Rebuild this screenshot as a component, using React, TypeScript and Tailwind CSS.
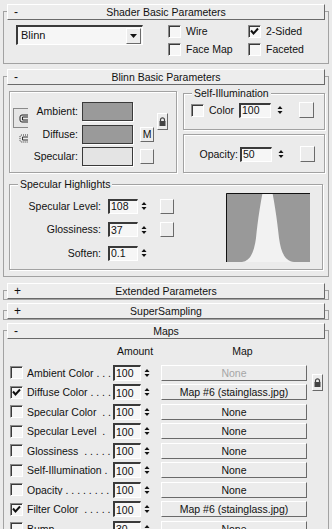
import React from 'react';

// classic max-style bevels
const raised = 'border border-t-white border-l-white border-b-[#6a6a6a] border-r-[#6a6a6a]';
const sunken = 'border-t-2 border-l-2 border-b border-r border-t-[#3a3a3a] border-l-[#3a3a3a] border-b-white border-r-white';

function Check({ on }: { on?: boolean }) {
  return (
    <span className="w-[13px] h-[13px] shrink-0 flex items-center justify-center bg-[#f6f6f6] border border-t-[#8a8a8a] border-l-[#8a8a8a] border-b-white border-r-white shadow-[inset_1px_1px_0_#3a3a3a]">
      {on && (
        <svg width="9" height="9" viewBox="0 0 9 9">
          <path d="M1 3.5 L3.5 6.5 L8 1.5" stroke="#111" strokeWidth="2" fill="none" />
        </svg>
      )}
    </span>
  );
}

function Arrows() {
  return (
    <svg width="6" height="12" viewBox="0 0 6 12" className="shrink-0">
      <path d="M0.5 5 L3 2 L5.5 5 Z" fill="#111" />
      <path d="M0.5 7 L3 10 L5.5 7 Z" fill="#111" />
    </svg>
  );
}

function Lock() {
  return (
    <span className={`w-[11px] h-[17px] flex justify-center pt-[3px] bg-[#ececec] ${raised}`}>
      <svg width="7" height="9" viewBox="0 0 7 9">
        <path d="M1.5 4.5 V2.8 A2 2 0 0 1 5.5 2.8 V4.5" stroke="#444" strokeWidth="1.2" fill="none" />
        <rect x="0.5" y="4" width="6" height="5" fill="#444" />
      </svg>
    </span>
  );
}

function Group({ title, className, children }: { title?: string; className?: string; children?: React.ReactNode }) {
  return (
    <div className={`relative border border-[#a2a2a2] shadow-[inset_1px_1px_0_#fff,1px_1px_0_#fff] ${className ?? ''}`}>
      {title && (
        <span className="absolute -top-[6px] left-[8px] px-[2px] bg-[#ebebeb] leading-none">{title}</span>
      )}
      {children}
    </div>
  );
}

function Rollout({ title, open, className, children }: { title: string; open?: boolean; className?: string; children?: React.ReactNode }) {
  return (
    <div className={`mx-[3px] border border-[#a2a2a2] ${className ?? ''}`}>
      <div className={`-mt-[8px] mx-[3px] h-[16px] grid grid-cols-[20px_1fr_20px] items-center bg-[#ededed] ${raised}`}>
        <span className="pl-[6px] text-[12px]">{open ? '-' : '+'}</span>
        <span className="text-center">{title}</span>
        <span />
      </div>
      {children}
    </div>
  );
}

const colors = [
  { label: 'Ambient:', fill: 'bg-[#9a9a9a]', btn: '' },
  { label: 'Diffuse:', fill: 'bg-[#9a9a9a]', btn: 'M' },
  { label: 'Specular:', fill: 'bg-[#e4e4e4]', btn: ' ' },
];

const highlights = [
  { label: 'Specular Level:', value: '108', btn: true },
  { label: 'Glossiness:', value: '37', btn: true },
  { label: 'Soften:', value: '0.1', btn: false },
];

const maps = [
  { label: 'Ambient Color . . .', on: false, amt: '100', map: 'None', dim: true },
  { label: 'Diffuse Color . . . .', on: true, amt: '100', map: 'Map #6 (stainglass.jpg)' },
  { label: 'Specular Color  . .', on: false, amt: '100', map: 'None' },
  { label: 'Specular Level  .', on: false, amt: '100', map: 'None' },
  { label: 'Glossiness  . . . . .', on: false, amt: '100', map: 'None' },
  { label: 'Self-Illumination .', on: false, amt: '100', map: 'None' },
  { label: 'Opacity . . . . . . . .', on: false, amt: '100', map: 'None' },
  { label: 'Filter Color  . . . . .', on: true, amt: '100', map: 'Map #6 (stainglass.jpg)' },
  { label: 'Bump . . . . . . . . . .', on: false, amt: '30', map: 'None' },
];

export default function App() {
  return (
    <div className="w-[332px] h-[529px] overflow-hidden bg-[#ebebeb] text-[10.5px] leading-none text-[#111] font-['Liberation_Sans',Arial,sans-serif] select-none">
      {/* Shader Basic Parameters */}
      <Rollout title="Shader Basic Parameters" open className="mt-[11px]">
        <div className="flex mt-[5px] pb-[7px]">
          <div className={`ml-[12px] w-[127px] h-[20px] flex items-center bg-[#f6f6f6] ${sunken}`}>
            <span className="flex-1 pl-[3px] text-[11px]">Blinn</span>
            <span className={`w-[15px] h-[16px] mr-px flex items-center justify-center bg-[#ececec] ${raised}`}>
              <svg width="7" height="4" viewBox="0 0 7 4">
                <path d="M0 0 H7 L3.5 4 Z" fill="#111" />
              </svg>
            </span>
          </div>
          <div className="ml-[25px] grid grid-cols-[80px_80px] gap-y-[5px]">
            {[
              ['Wire', false],
              ['2-Sided', true],
              ['Face Map', false],
              ['Faceted', false],
            ].map(([t, on]) => (
              <div key={t as string} className="h-[13px] flex items-center gap-[5px]">
                <Check on={on as boolean} />
                <span>{t}</span>
              </div>
            ))}
          </div>
        </div>
      </Rollout>

      {/* Blinn Basic Parameters */}
      <Rollout title="Blinn Basic Parameters" open className="mt-[12px]">
        <div className="flex mt-[6px]">
          <Group className="ml-[5px] w-[168px] h-[82px] flex">
            <div className="ml-[3px] mt-[16px] w-[15px] flex flex-col">
              <span className="h-[20px] flex items-center justify-end border border-[#8a8a8a] border-r-0 bg-[#e6e6e6]">
                <svg width="9" height="9" viewBox="0 0 9 9">
                  <path d="M9 1 H3 Q1 1 1 3 V6 Q1 8 3 8 H9" stroke="#222" fill="none" />
                  <path d="M9 3 H3.5 V6 H9" stroke="#222" fill="none" />
                </svg>
              </span>
              <span className="h-[20px] flex items-center justify-end">
                <svg width="9" height="9" viewBox="0 0 9 9">
                  <path d="M9 1 H3 Q1 1 1 3 V6 Q1 8 3 8 H9" stroke="#333" fill="none" strokeDasharray="1 1" />
                  <path d="M9 3 H3.5 V6 H9" stroke="#333" fill="none" />
                </svg>
              </span>
            </div>
            <div className="mt-[10px] flex flex-col gap-y-[3.5px]">
              {colors.map((c) => (
                <div key={c.label} className="h-[19px] flex items-center">
                  <span className="w-[50px] text-right">{c.label}</span>
                  <span className={`ml-[4px] w-[51px] h-[19px] border border-[#3a3a3a] shadow-[1px_1px_0_#fff] ${c.fill}`} />
                  {c.btn ? (
                    <span className={`ml-[7px] w-[14px] h-[15px] flex items-center justify-center bg-[#ececec] ${raised}`}>
                      {c.btn.trim()}
                    </span>
                  ) : (
                    <span className="ml-[7px] w-[14px]" />
                  )}
                </div>
              ))}
            </div>
            <div className="ml-[3px] mt-[21px]">
              <Lock />
            </div>
          </Group>

          <div className="ml-[6px] w-[142px] flex flex-col">
            <Group title="Self-Illumination" className="mt-[2px] h-[37px]">
              <div className="flex items-center h-[16px] mt-[8px] pl-[7px]">
                <Check />
                <span className="ml-[5px] w-[25px]">Color</span>
                <span className={`ml-[5px] w-[32px] h-[15px] flex items-center pl-[1px] bg-[#f6f6f6] ${sunken}`}>100</span>
                <span className="ml-[6px]"><Arrows /></span>
                <span className={`ml-[16px] w-[15px] h-[16px] bg-[#ececec] ${raised}`} />
              </div>
            </Group>
            <Group className="mt-[4px] h-[39px]">
              <div className="flex items-center h-[16px] mt-[11px] pl-[4px]">
                <span className="w-[50px] text-right">Opacity:</span>
                <span className={`ml-[2px] w-[32px] h-[15px] flex items-center pl-[1px] bg-[#f6f6f6] ${sunken}`}>50</span>
                <span className="ml-[6px]"><Arrows /></span>
                <span className={`ml-[16px] w-[15px] h-[16px] bg-[#ececec] ${raised}`} />
              </div>
            </Group>
          </div>
        </div>

        <Group title="Specular Highlights" className="ml-[5px] mt-[11px] mb-[6px] w-[314px] h-[86px] flex">
          <div className="pt-[13px] flex flex-col gap-y-[7.5px]">
            {highlights.map((h) => (
              <div key={h.label} className="h-[16px] flex items-center">
                <span className="w-[91px] text-right">{h.label}</span>
                <span className={`ml-[7px] w-[30px] h-[15px] flex items-center pl-[1px] bg-[#f6f6f6] ${sunken}`}>{h.value}</span>
                <span className="ml-[3px]"><Arrows /></span>
                {h.btn && <span className={`ml-[13px] w-[14px] h-[15px] bg-[#ececec] ${raised}`} />}
              </div>
            ))}
          </div>
          <svg width="84" height="69" viewBox="0 0 84 69" className="ml-auto mr-[12px] mt-[8px]">
            <rect width="84" height="69" fill="#999999" />
            <path d="M16 69 C24 68 28 60 30 45 C32 25 35 8 36.5 0 L46.5 0 C48 8 51 25 53 45 C55 60 59 68 68 69 Z" fill="#f2f2f2" />
            <path d="M0.5 69 V0.5 H84" stroke="#111" fill="none" />
          </svg>
        </Group>
      </Rollout>

      <Rollout title="Extended Parameters" className="mt-[13px]" />
      <Rollout title="SuperSampling" className="mt-[10px]" />

      {/* Maps */}
      <Rollout title="Maps" open className="mt-[10px] border-b-0">
        <div className="h-[24px] flex items-center pl-[101px]">
          <span className="w-[60px] text-center">Amount</span>
          <span className="ml-[47px] w-[61px] text-center">Map</span>
        </div>
        <div className="flex">
          <div className="flex flex-col">
            {maps.map((m) => (
              <div key={m.label} className="h-[19.5px] flex items-center pl-[6px]">
                <Check on={m.on} />
                <span className="ml-[4px] w-[85px] whitespace-pre overflow-hidden">{m.label}</span>
                <span className={`ml-[1px] w-[28px] h-[16px] flex items-center pl-[1px] bg-[#f6f6f6] ${sunken}`}>{m.amt}</span>
                <span className="ml-[3px]"><Arrows /></span>
                <span
                  className={`ml-[11px] w-[146px] h-[16px] flex items-center justify-center bg-[#ececec] ${raised} ${
                    m.dim ? 'text-[#a6a6a6]' : ''
                  }`}
                >
                  {m.map}
                </span>
              </div>
            ))}
          </div>
          <div className="ml-[5px] mt-[10.5px]">
            <Lock />
          </div>
        </div>
      </Rollout>
    </div>
  );
}
